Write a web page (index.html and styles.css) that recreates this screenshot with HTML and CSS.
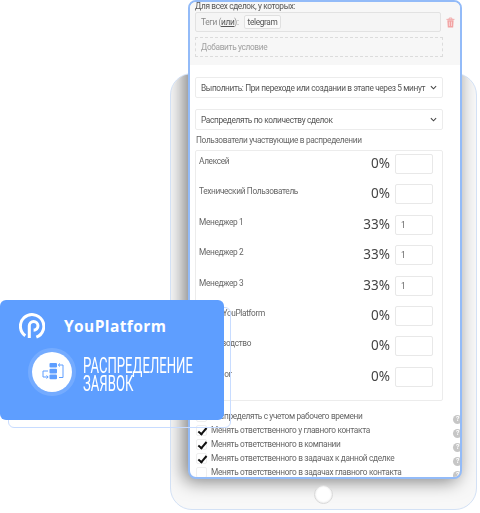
FILE: index.html
```html
<!DOCTYPE html>
<html lang="ru">
<head>
  <meta charset="UTF-8">
  <meta name="viewport" content="width=device-width, initial-scale=1">
  <title>Распределение заявок</title>
  <link rel="stylesheet" href="styles.css">
</head>
<body>

<div class="stage">

  <div class="tablet">
    <div class="tablet-shadow"></div>
    <div class="home-button"></div>
  </div>

  <section class="panel">
    <div class="filter">
      <p class="filter-title">Для всех сделок, у которых:</p>
      <div class="filter-line">
        <div class="tag-box">
          <span class="tag-label">Теги (<u>или</u>):</span>
          <span class="tag">telegram</span>
        </div>
        <svg class="trash" viewBox="0 0 10 12" width="9" height="11">
          <path d="M0.5 2.5h9M3.5 2.5V1h3v1.500" fill="none" stroke="#f2a3a3" stroke-width="1"/>
          <path d="M1.500 3.500h7l-.5 8h-6z" fill="#f2a3a3"/>
          <path d="M3.800 5v5M6.200 5v5" stroke="#fff" stroke-width=".6"/>
        </svg>
      </div>
      <div class="add-box">Добавить условие</div>
    </div>

    <div class="body">
      <div class="select">
        <span>Выполнить: При переходе или создании в этапе через 5 минут</span>
        <svg class="chevron" viewBox="0 0 8 5" width="7" height="5"><path d="M1 1l3 3 3-3" fill="none" stroke="#444" stroke-width="1.200"/></svg>
      </div>
      <div class="select">
        <span>Распределять по количеству сделок</span>
        <svg class="chevron" viewBox="0 0 8 5" width="7" height="5"><path d="M1 1l3 3 3-3" fill="none" stroke="#444" stroke-width="1.200"/></svg>
      </div>

      <p class="users-title">Пользователи участвующие в распределении</p>
      <div class="users">
        <div class="user"><span class="user-name">Алексей</span><span class="percent">0%</span><span class="count"></span></div>
        <div class="user"><span class="user-name">Технический Пользователь</span><span class="percent">0%</span><span class="count"></span></div>
        <div class="user"><span class="user-name">Менеджер 1</span><span class="percent">33%</span><span class="count">1</span></div>
        <div class="user"><span class="user-name">Менеджер 2</span><span class="percent">33%</span><span class="count">1</span></div>
        <div class="user"><span class="user-name">Менеджер 3</span><span class="percent">33%</span><span class="count">1</span></div>
        <div class="user"><span class="user-name">Отдел YouPlatform</span><span class="percent">0%</span><span class="count"></span></div>
        <div class="user"><span class="user-name">Производство</span><span class="percent">0%</span><span class="count"></span></div>
        <div class="user"><span class="user-name">Технолог</span><span class="percent">0%</span><span class="count"></span></div>
      </div>

      <ul class="options">
        <li><span class="check"></span><span class="option-text">Распределять с учетом рабочего времени</span><span class="help">?</span></li>
        <li><span class="check on"></span><span class="option-text">Менять ответственного у главного контакта</span><span class="help">?</span></li>
        <li><span class="check on"></span><span class="option-text">Менять ответственного в компании</span><span class="help">?</span></li>
        <li><span class="check on"></span><span class="option-text">Менять ответственного в задачах к данной сделке</span><span class="help">?</span></li>
        <li><span class="check"></span><span class="option-text">Менять ответственного в задачах главного контакта</span><span class="help">?</span></li>
      </ul>
    </div>
  </section>

  <div class="banner-back"></div>
  <div class="banner">
    <div class="brand">
      <svg class="brand-logo" viewBox="0 0 24 24" width="26" height="26">
        <path d="M5.800 21A10.800 10.800 0 1 1 16 22.300" fill="none" stroke="#fff" stroke-width="2.800"/>
        <path d="M9.500 23V11.800A4 4 0 1 1 13.500 15.800" fill="none" stroke="#fff" stroke-width="2.800"/>
      </svg>
      <span class="brand-name">YouPlatform</span>
    </div>
    <div class="feature">
      <div class="feature-icon">
        <svg viewBox="0 0 24 20" width="24" height="20">
          <rect x="7.500" y="1" width="7.500" height="4.600" rx="1" fill="#5e9eff"/>
          <rect x="7.500" y="6.800" width="7.500" height="4.600" rx="1" fill="#5e9eff"/>
          <rect x="7.500" y="12.600" width="7.500" height="4.600" rx="1" fill="#5e9eff"/>
          <path d="M16.500 3H21V15.500H17" fill="none" stroke="#5e9eff" stroke-width="1"/>
          <path d="M6 9H1V15H5.500" fill="none" stroke="#5e9eff" stroke-width="1"/>
          <path d="M18 1.500L16.300 3 18 4.500M4.500 13.500L6.200 15 4.500 16.500" fill="none" stroke="#5e9eff" stroke-width="1"/>
        </svg>
      </div>
      <div class="feature-name">
        <span>РАСПРЕДЕЛЕНИЕ</span>
        <span>ЗАЯВОК</span>
      </div>
    </div>
  </div>

</div>

</body>
</html>
```

FILE: styles.css
```css
html, body {
  margin: 0;
  padding: 0;
  background: #fff;
}
body {
  font-family: "Roboto", "Noto Sans", sans-serif;
  color: #555;
}
.stage {
  position: relative;
  width: 480px;
  height: 513px;
  overflow: hidden;
}

/* tablet behind the panel */
.tablet {
  position: absolute;
  left: 170px;
  top: 73px;
  width: 305px;
  height: 435px;
  background: #f8f8f8;
  border: 1.5px solid #d3e1f5;
  border-radius: 22px;
  overflow: hidden;
}
.tablet-shadow {
  position: absolute;
  left: 17px;
  top: -80px;
  width: 274px;
  height: 483px;
  border-radius: 8px;
  box-shadow: -4px 4px 18px rgba(0,0,0,0.5);
}
.home-button {
  position: absolute;
  left: 143px;
  top: 411px;
  width: 17px;
  height: 17px;
  background: #fff;
  border: 1px solid #d8d8d8;
  border-radius: 50%;
  box-shadow: inset 0 0 2px rgba(0,0,0,0.15);
}

/* main panel */
.panel {
  position: absolute;
  left: 188px;
  top: 0;
  width: 270px;
  height: 475px;
  background: #fff;
  border: 2px solid #93bbf8;
  border-radius: 8px;
  overflow: hidden;
  filter: blur(0.4px);
  font-size: 8.3px;
  letter-spacing: -0.35px;
}
.filter {
  height: 63px;
  padding: 0 5px;
  background: #f7f7f7;
}
.filter-title {
  margin: 0;
  height: 10px;
  line-height: 9px;
  color: #555;
}
.filter-line {
  display: flex;
  align-items: center;
  gap: 5px;
}
.tag-box {
  box-sizing: border-box;
  width: 248px;
  height: 20px;
  display: flex;
  align-items: center;
  gap: 5px;
  padding: 0 5px;
  background: #f5f5f5;
  border: 1px solid #e2e2e2;
  border-radius: 2px;
}
.tag-label {
  color: #888;
}
.tag-label u {
  color: #555;
}
.tag {
  padding: 0 3px;
  line-height: 12px;
  background: #fafafa;
  border: 1px solid #e0e0e0;
  border-radius: 2px;
  color: #555;
}
.add-box {
  box-sizing: border-box;
  width: 248px;
  height: 20px;
  margin-top: 5px;
  padding: 0 5px;
  line-height: 18px;
  border: 1px dashed #dcdcdc;
  color: #a0a0a0;
}
.body {
  padding: 12px 0 0 5px;
}
.select {
  box-sizing: border-box;
  width: 248px;
  height: 21px;
  margin-bottom: 11px;
  padding: 0 5px;
  display: flex;
  align-items: center;
  justify-content: space-between;
  border: 1px solid #ececec;
  border-radius: 2px;
  color: #555;
  white-space: nowrap;
}
.select + .select {
  margin-bottom: 5px;
}
.users-title {
  margin: 0;
  height: 11px;
  line-height: 11px;
  padding-left: 1px;
  color: #666;
}
.users {
  box-sizing: border-box;
  width: 248px;
  height: 251px;
  margin-top: 4px;
  padding: 3px 0 0 3px;
  border: 1px solid #ececec;
  border-radius: 2px;
}
.user {
  height: 30.4px;
  display: flex;
  align-items: flex-start;
  color: #666;
}
.user-name {
  flex: 1;
  line-height: 11px;
  padding-top: 2px;
}
.percent {
  font-family: "Noto Sans", sans-serif;
  font-size: 13.5px;
  letter-spacing: 0;
  line-height: 19px;
  color: #444;
}
.count {
  box-sizing: border-box;
  width: 38px;
  height: 20px;
  margin: 0 9px 0 5px;
  padding-left: 5px;
  line-height: 19px;
  border: 1px solid #e8e8e8;
  border-radius: 2px;
  background: #fff;
}
.options {
  list-style: none;
  margin: 8px 0 0 1px;
  padding: 0;
}
.options li {
  height: 14px;
  display: flex;
  align-items: center;
  white-space: nowrap;
  color: #666;
}
.check {
  box-sizing: border-box;
  position: relative;
  width: 11px;
  height: 11px;
  margin-right: 4px;
  border: 1px solid #efefef;
  border-radius: 2px;
}
.check.on::after {
  content: "";
  position: absolute;
  left: 3px;
  top: 0;
  width: 3px;
  height: 7px;
  border: solid #111;
  border-width: 0 2px 2px 0;
  transform: rotate(40deg);
}
.option-text {
  flex: 1;
}
.help {
  align-self: flex-start;
  width: 9px;
  height: 9px;
  margin: 6px -2px 0 0;
  border-radius: 50%;
  background: #c6c6c6;
  color: #fff;
  font-size: 7px;
  font-weight: 700;
  line-height: 9px;
  text-align: center;
}

/* blue banner over the left side */
.banner-back {
  position: absolute;
  left: 8px;
  top: 307px;
  width: 221px;
  height: 119px;
  border: 1px solid #c8dcff;
  border-radius: 6px;
}
.banner {
  position: absolute;
  left: 0;
  top: 300px;
  box-sizing: border-box;
  width: 224px;
  height: 120px;
  padding: 13px 0 0 19px;
  background: #5e9eff;
  border-radius: 6px;
  color: #fff;
}
.brand {
  display: flex;
  align-items: center;
  gap: 19px;
}
.brand-logo {
  display: block;
  flex-shrink: 0;
}
.brand-name {
  font-family: "Open Sans", sans-serif;
  font-size: 15.5px;
  font-weight: 700;
  letter-spacing: 0.4px;
}
.feature {
  display: flex;
  align-items: center;
  margin: 9px 0 0 9px;
}
.feature-icon {
  box-sizing: content-box;
  flex-shrink: 0;
  width: 40px;
  height: 40px;
  display: flex;
  align-items: center;
  justify-content: center;
  background: #fff;
  border: 4px solid rgba(255,255,255,0.14);
  background-clip: padding-box;
  border-radius: 50%;
}
.feature-icon svg {
  margin-left: 3px;
}
.feature-name {
  display: flex;
  flex-direction: column;
  margin-left: 7px;
  padding-top: 3px;
  font-family: "Roboto", sans-serif;
  font-size: 22.5px;
  line-height: 18px;
  transform: scaleX(0.584);
  transform-origin: left center;
  white-space: nowrap;
}
```
